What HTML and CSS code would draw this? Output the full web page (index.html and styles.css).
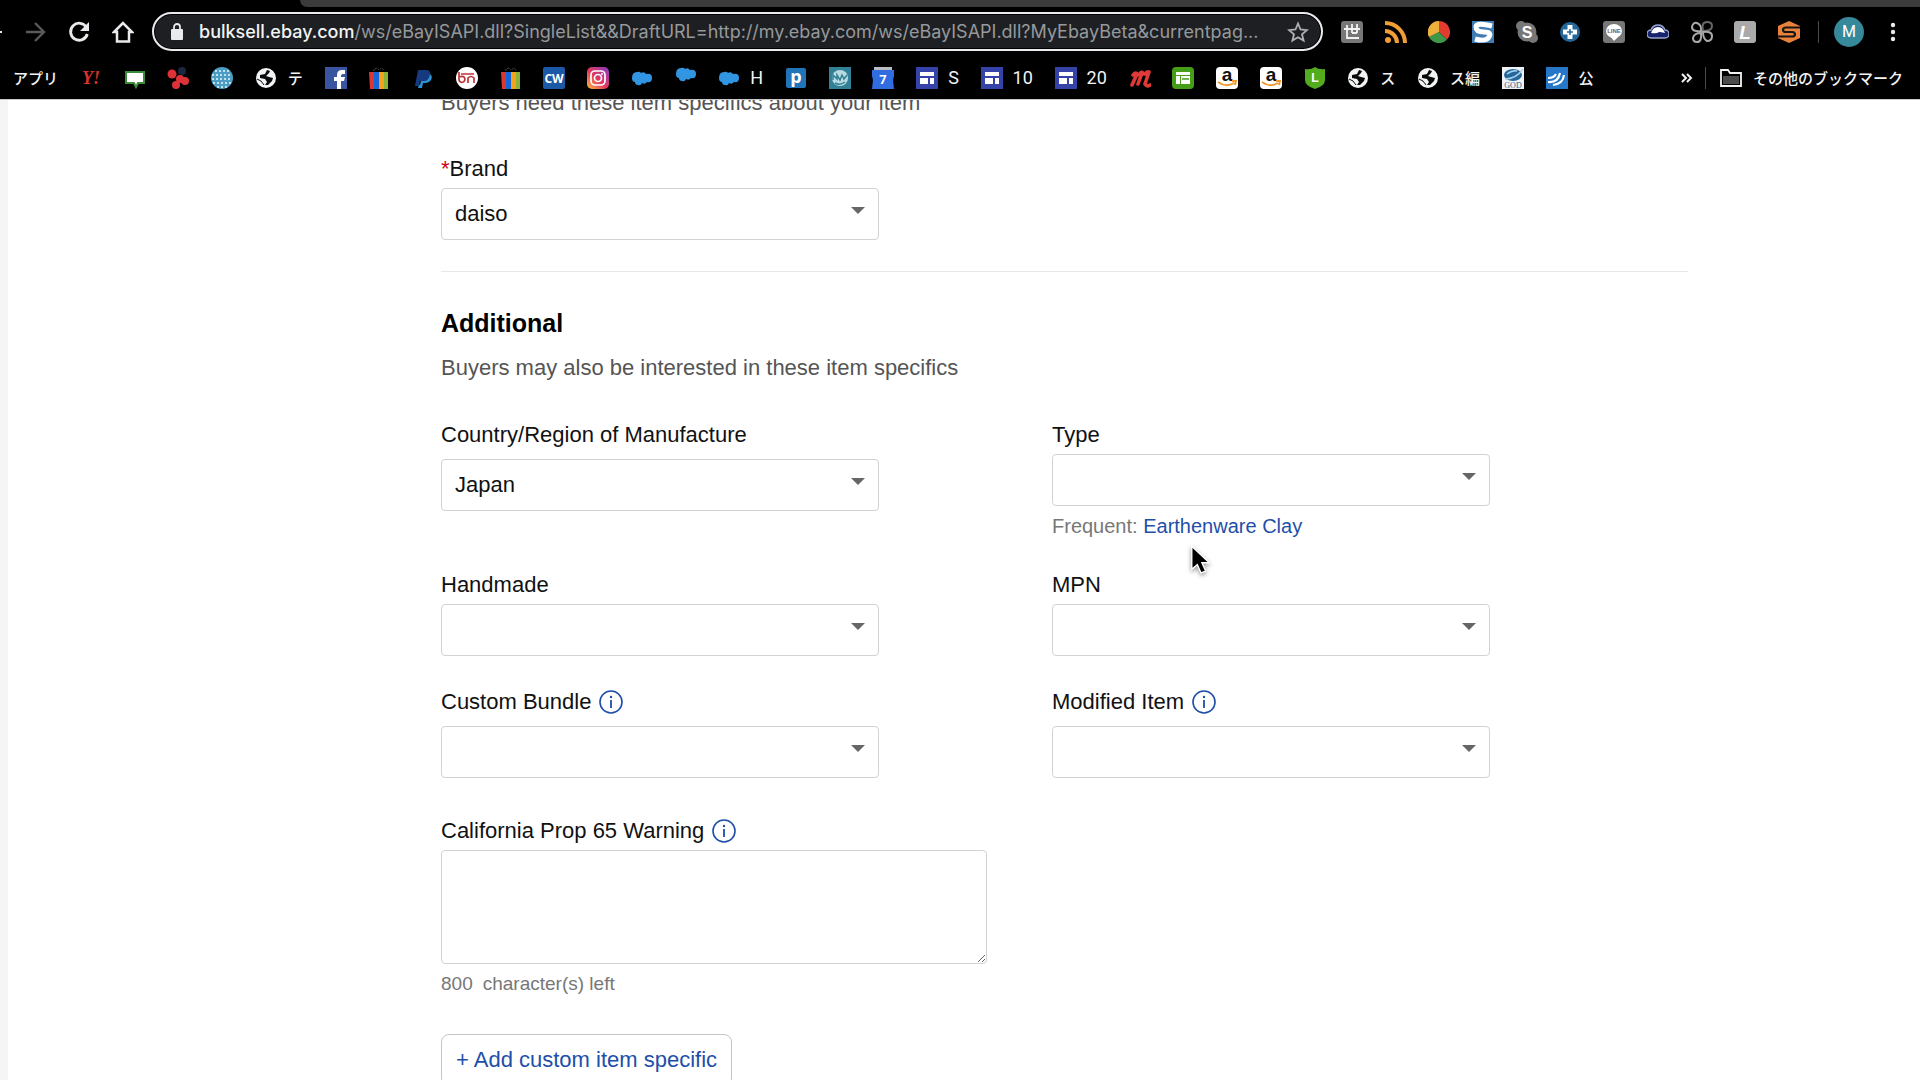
FILE: index.html
```html
<!DOCTYPE html>
<html lang="en">
<head>
<meta charset="utf-8">
<title>Item specifics</title>
<link rel="stylesheet" href="styles.css">
</head>
<body>
<svg class="sprite" aria-hidden="true">
  <symbol id="world" viewBox="0 0 22 22"><circle cx="11" cy="11" r="10" fill="#f1f3f4"/><path d="M12 3L10 7 5 8 5 11 10 12 12 15 10 18 13 18 17 14 18 11 14 10 11 9 14 6 15 4z" fill="#0a0a0a"/><path d="M2 12l4 2 3 4" fill="none" stroke="#0a0a0a" stroke-width="1"/></symbol>
  <symbol id="bag" viewBox="0 0 22 22"><path d="M6 4V2l3-1 2 2 3-2 2 2v1" fill="none" stroke="#444" stroke-width="1" stroke-dasharray="2 1"/><path d="M1 5h5v17H2z" fill="#d93832"/><path d="M6 5h5v17H6z" fill="#1466d8"/><path d="M11 5h5v17h-5z" fill="#f5a31d"/><path d="M16 5h4v17h-4z" fill="#86b53a"/></symbol>
  <symbol id="cloud" viewBox="0 0 22 22"><path d="M1 11Q1 5 6 5q3-1 4 1 3-2 5 1 6-1 6 4 0 5-5 4-2 3-5 1-1 3-4 2-3 0-3-3-3 0-3-4z" fill="#3195e2"/></symbol>
  <symbol id="sheet" viewBox="0 0 22 22"><path d="M0 0h22v22H0z" fill="#3543a8"/><path d="M4 5h14v4H4zM4 11h8v6H4zM14 11h4v6h-4z" fill="#fff"/></symbol>
  <symbol id="amazon" viewBox="0 0 22 22"><rect width="22" height="22" rx="4" fill="#fff"/><text x="11" y="14" font-size="19" font-weight="700" font-family="Liberation Sans, sans-serif" text-anchor="middle" fill="#111">a</text><path d="M2 15q8 6 16 1M16 14l4 0-1 4" fill="none" stroke="#f29a2e" stroke-width="2"/></symbol>
  <symbol id="info" viewBox="0 0 24 24"><circle cx="12" cy="12" r="11" fill="none" stroke="#1e4fa8" stroke-width="1.600"/><path d="M12 10v8" stroke="#1e4fa8" stroke-width="1.800"/><circle cx="12" cy="7" r="1.200" fill="#1e4fa8"/></symbol>
</svg>

<header class="browser">
  <div class="tabstrip"></div>
  <div class="toolbar">
    <nav class="nav" aria-label="Browser">
      <button class="nav-btn back" aria-label="Back"><svg viewBox="0 0 2 22"><path d="M0 10h2v2H0z" fill="#e8eaed"/></svg></button>
      <button class="nav-btn" aria-label="Forward"><svg viewBox="0 0 22 22"><path d="M2 11h18M11 2l9 9-9 9" fill="none" stroke="#5a5a5a" stroke-width="2.400"/></svg></button>
      <button class="nav-btn" aria-label="Reload"><svg viewBox="0 0 22 22"><path d="M18.500 6.500A8.500 8.500 0 1 0 19.300 13" fill="none" stroke="#e8eaed" stroke-width="2.800"/><path d="M21 1v9h-9z" fill="#e8eaed"/></svg></button>
      <button class="nav-btn" aria-label="Home"><svg viewBox="0 0 22 22"><path d="M11 2L2 11h3v9.500h12V11h3z" fill="none" stroke="#e8eaed" stroke-width="2.500"/></svg></button>
    </nav>
    <div class="address">
      <svg class="lock" viewBox="0 0 12 17"><rect y="6" width="12" height="11" rx="1" fill="#e8eaed"/><path d="M3 7V4a3 3 0 0 1 6 0v3" fill="none" stroke="#e8eaed" stroke-width="1.800"/></svg>
      <div class="url" role="textbox" aria-label="Address"><b>bulksell.ebay.com</b>/ws/eBayISAPI.dll?SingleList&amp;&amp;DraftURL=http://my.ebay.com/ws/eBayISAPI.dll?MyEbayBeta&amp;currentpag...</div>
      <button class="nav-btn" aria-label="Bookmark"><svg viewBox="0 0 22 22"><path d="M11 2.500l2.500 6 6.500.6-5 4.200 1.600 6.300L11 16.200l-5.600 3.400L7 13.300 2 9.100l6.500-.6z" fill="none" stroke="#aeb1b5" stroke-width="1.800"/></svg></button>
    </div>
    <div class="extensions">
      <svg viewBox="0 0 22 22"><rect width="22" height="22" rx="3" fill="#777"/><path d="M3 8h16M6 4v13h12M11 3v9M16 3v9M11 12h5" fill="none" stroke="#f2f2f2" stroke-width="1.800"/></svg>
      <svg viewBox="0 0 22 22"><circle cx="3" cy="19" r="3" fill="#f29d38"/><path d="M0 10a12 12 0 0 1 12 12M0 2a20 20 0 0 1 20 20" fill="none" stroke="#f29d38" stroke-width="4"/></svg>
      <svg viewBox="0 0 22 22"><path d="M11 11V0a11 11 0 0 1 8 18.500z" fill="#e23b30"/><path d="M11 11l8 7.500A11 11 0 0 1 1 16z" fill="#3f9847"/><path d="M11 11L1 16A11 11 0 0 1 11 0z" fill="#f0b13c"/></svg>
      <svg viewBox="0 0 22 22"><path d="M0 0h22v22H0z" fill="#3f7cb4"/><path d="M20 5Q4 1 4 6t8 5 5 5-14 2" fill="none" stroke="#fff" stroke-width="5"/></svg>
      <svg viewBox="0 0 22 22"><circle cx="5" cy="5" r="5" fill="#777"/><circle cx="17" cy="17" r="5" fill="#777"/><circle cx="11" cy="11" r="9.500" fill="#777"/><text x="11" y="17" font-size="16" font-weight="700" font-family="Liberation Sans, sans-serif" text-anchor="middle" fill="#fff">S</text></svg>
      <svg viewBox="0 0 22 22"><circle cx="11" cy="11" r="10" fill="#24679b"/><path d="M8.500 4h5v4.500H18v5h-4.500V18h-5v-4.500H4v-5h4.500z" fill="#fff"/><path d="M11 8v6M8 11h6" stroke="#24679b" stroke-width="1.500"/></svg>
      <svg viewBox="0 0 22 22"><rect width="22" height="22" rx="3" fill="#777"/><ellipse cx="11" cy="10" rx="8" ry="7" fill="#fff"/><path d="M7 15l4 5 4-4z" fill="#fff"/><text x="11" y="12" font-size="6" font-weight="700" font-family="Liberation Sans, sans-serif" text-anchor="middle" fill="#666">LINE</text></svg>
      <svg viewBox="0 0 22 22"><path d="M4 17a4 4 0 0 1 0-8q2-5 7-5t7 5a4 4 0 0 1 0 8z" fill="#17246d" stroke="#98a3cc" stroke-width="1.500"/><path d="M4 12q2-6 7-6t7 6q-4-1-6-1-2 2-8 1z" fill="#fff"/></svg>
      <svg viewBox="0 0 22 22" fill="none" stroke="#aaa" stroke-width="2"><path d="M10 10Q1 11 1 6q1-5 5-4 5 2 4 8z"/><path d="M12 10Q10 1 16 1q5 0 5 4 0 5-9 5z" stroke="#666"/><path d="M12 11q9-1 9 4 0 5-5 5-4-2-4-9z"/><path d="M10 12q1 9-4 9-4 0-4-4 1-5 8-5z"/></svg>
      <svg viewBox="0 0 22 22"><rect width="22" height="22" rx="3" fill="#aaa"/><text x="11" y="18" font-size="19" font-weight="700" font-style="italic" font-family="Liberation Sans, sans-serif" text-anchor="middle" fill="#fff">L</text></svg>
      <svg viewBox="0 0 22 22"><path d="M11 0l11 5v12l-11 5-11-5V5z" fill="#e9813a"/><path d="M22 6.500H8q-3 0-3 2.500 0 2 3 2h6q3 0 3 2.500 0 2-3 2H0" fill="none" stroke="#151515" stroke-width="2.200"/></svg>
    </div>
    <div class="profile">
      <span class="divider"></span>
      <button class="avatar" aria-label="Profile">M</button>
      <button class="nav-btn menu" aria-label="Menu"><svg viewBox="0 0 6 22"><g fill="#e8eaed"><circle cx="3" cy="4" r="2.200"/><circle cx="3" cy="11" r="2.200"/><circle cx="3" cy="18" r="2.200"/></g></svg></button>
    </div>
  </div>

  <nav class="bookmarks" aria-label="Bookmarks">
    <div class="bookmark-list">
      <a href="#">アプリ</a>
      <a href="#"><svg viewBox="0 0 22 22"><text x="11" y="17" font-size="18" font-weight="700" font-style="italic" font-family="Liberation Serif, serif" text-anchor="middle" fill="#d8322c">Y!</text></svg></a>
      <a href="#"><svg viewBox="0 0 22 22"><path d="M2 5h18v11h-6l-2 4-2-4H2z" fill="#fff" stroke="#3c8a3a" stroke-width="2"/></svg></a>
      <a href="#"><svg viewBox="0 0 22 22"><circle cx="15" cy="4" r="4" fill="#1c2742"/><g fill="#dc3238"><circle cx="5" cy="7" r="4.500"/><circle cx="13" cy="12" r="4"/><circle cx="9" cy="18" r="4"/><circle cx="18" cy="14" r="4"/></g></svg></a>
      <a href="#"><svg viewBox="0 0 22 22"><circle cx="11" cy="11" r="11" fill="#4b9dc4"/><path d="M4 4h14M1 8h20M1 12h20M2 16h18M6 20h10" stroke="#c1e1ed" stroke-width="2" stroke-dasharray="2 2"/></svg></a>
      <a href="#"><svg><use href="#world"/></svg>テ</a>
      <a href="#"><svg viewBox="0 0 22 22"><path d="M0 0h22v22H0z" fill="#3a559f"/><path d="M12 22v-8H9v-4h3V8q0-5 5-5h3v4h-2q-2 0-2 2v1h4l-1 4h-3v8z" fill="#fff"/></svg></a>
      <a href="#"><svg><use href="#bag"/></svg></a>
      <a href="#"><svg viewBox="0 0 22 22"><path d="M6 3h8q5 0 4 5-1 6-7 6H8l-1 5H3z" fill="#153a80"/><path d="M18 7q3 2 1 6-2 3-6 3h-2l-1 5H6l1-3h1l1-4h3q5 0 6-7z" fill="#2c92d4"/></svg></a>
      <a href="#"><svg viewBox="0 0 22 22"><circle cx="11" cy="11" r="11" fill="#fff"/><path d="M3 5v8a3 3 0 1 0 1-3M12 16v-5q3-3 6 0v5M5 7h13" fill="none" stroke="#bd3338" stroke-width="1.700"/></svg></a>
      <a href="#"><svg><use href="#bag"/></svg></a>
      <a href="#"><svg viewBox="0 0 22 22"><rect width="22" height="22" rx="2" fill="#1b58a5"/><text x="11" y="16" font-size="12" font-weight="700" font-family="Open Sans, sans-serif" text-anchor="middle" fill="#fff">CW</text></svg></a>
      <a href="#"><svg viewBox="0 0 22 22"><defs><linearGradient id="ig" x1="0" y1="1" x2="1" y2="0"><stop offset="0" stop-color="#fbbc45"/><stop offset=".45" stop-color="#e5395c"/><stop offset="1" stop-color="#873bc7"/></linearGradient></defs><rect width="22" height="22" rx="5" fill="url(#ig)"/><rect x="4" y="4" width="14" height="14" rx="4" fill="none" stroke="#fff" stroke-width="1.700"/><circle cx="11" cy="11" r="3.500" fill="none" stroke="#fff" stroke-width="1.700"/><circle cx="15" cy="7" r="1" fill="#fff"/></svg></a>
      <a href="#"><svg><use href="#cloud"/></svg></a>
      <a href="#" class="raised"><svg><use href="#cloud"/></svg></a>
      <a href="#" class="latin"><svg><use href="#cloud"/></svg>H</a>
      <a href="#"><svg viewBox="0 0 22 22"><rect x="1" y="1" width="20" height="20" rx="2" fill="#1f75b8"/><text x="11" y="16" font-size="18" font-weight="700" font-family="Open Sans, sans-serif" text-anchor="middle" fill="#fff">p</text></svg></a>
      <a href="#"><svg viewBox="0 0 22 22"><path d="M0 0h22v22H0z" fill="#328096"/><circle cx="11" cy="11" r="8" fill="#b9dbe1"/><path d="M4 13V8l4 4V8l3 5 2-5 2 4 3-4M6 16q5 3 10-1" fill="none" stroke="#328096" stroke-width="1.500"/></svg></a>
      <a href="#"><svg viewBox="0 0 22 22"><path d="M2 0h18v4H2z" fill="#b9bcc2"/><path d="M0 3h22v6l-1 4 1 9H0l1-9-1-4z" fill="#2f6de0"/><text x="11" y="17" font-size="13" font-weight="700" font-family="Roboto, sans-serif" text-anchor="middle" fill="#fff">7</text></svg></a>
      <a href="#" class="latin"><svg><use href="#sheet"/></svg>S</a>
      <a href="#" class="latin"><svg><use href="#sheet"/></svg>10</a>
      <a href="#" class="latin"><svg><use href="#sheet"/></svg>20</a>
      <a href="#"><svg viewBox="0 0 22 22"><path d="M3 18L8 7M9 17l4-11M16 17l4-12M4 8q3-4 4 0M10 8q3-5 4-1M16 7q2-3 4-2M16 17q2 3 5 1" fill="none" stroke="#e03a38" stroke-width="3.600" stroke-linecap="round"/></svg></a>
      <a href="#"><svg viewBox="0 0 22 22"><rect width="22" height="22" rx="4" fill="#459d18"/><path d="M4 5h14v3H4zM4 9h4v8H4zM9 9h9v8H9z" fill="#fff"/><path d="M10 12h7" stroke="#459d18" stroke-width="1.500"/></svg></a>
      <a href="#"><svg><use href="#amazon"/></svg></a>
      <a href="#"><svg><use href="#amazon"/></svg></a>
      <a href="#"><svg viewBox="0 0 22 22"><path d="M1 2q6 1 10-2 4 3 10 2v11q0 6-10 9-10-3-10-9z" fill="#53ac1d"/><text x="11" y="15" font-size="12" font-weight="700" font-family="Liberation Sans, sans-serif" text-anchor="middle" fill="#fff">L</text></svg></a>
      <a href="#"><svg><use href="#world"/></svg>ス</a>
      <a href="#"><svg><use href="#world"/></svg>ス編</a>
      <a href="#"><svg viewBox="0 0 22 22"><path d="M0 0h22v22H0z" fill="#eef3f7"/><ellipse cx="11" cy="8" rx="9" ry="6" fill="#25679b"/><path d="M5 7q6-4 10-3M3 12Q14 12 21 2" fill="none" stroke="#a9d2ea" stroke-width="1.500"/><text x="11" y="21" font-size="8" font-family="Liberation Serif, serif" text-anchor="middle" fill="#345f89">GOD</text></svg></a>
      <a href="#"><svg viewBox="0 0 22 22"><path d="M0 0h22v22H0z" fill="#2677c7"/><path d="M2 11q6 0 8-4M2 15q10 1 12-9M7 18q10-1 11-10" fill="none" stroke="#fff" stroke-width="2.200"/></svg>公</a>
    </div>
    <div class="other">
      <button class="more" aria-label="More bookmarks"><svg viewBox="0 0 12 12"><path d="M1 2l4 4-4 4M6 2l4 4-4 4" fill="none" stroke="#f1f3f4" stroke-width="2"/></svg></button>
      <span class="divider"></span>
      <a href="#"><svg viewBox="0 0 22 22"><path d="M1 19V3h7l2 3h11v13z" fill="none" stroke="#f1f3f4" stroke-width="1.800"/><path d="M3 9h16v8H3z" fill="#4b4b4b"/></svg>その他のブックマーク</a>
    </div>
  </nav>
</header>

<main class="page">
  <form class="specifics">
    <section class="required">
      <p class="lead">Buyers need these item specifics about your item</p>
      <div class="field">
        <label for="brand"><span class="star">*</span>Brand</label>
        <span class="picker"><select id="brand"><option>daiso</option></select></span>
      </div>
    </section>

    <section class="additional">
      <h2>Additional</h2>
      <p class="lead">Buyers may also be interested in these item specifics</p>
      <div class="grid">
        <div class="field roomy">
          <label for="country">Country/Region of Manufacture</label>
          <span class="picker"><select id="country"><option>Japan</option></select></span>
        </div>
        <div class="field">
          <label for="type">Type</label>
          <span class="picker"><select id="type"><option></option></select></span>
          <p class="hint">Frequent: <a href="#">Earthenware Clay</a></p>
          <svg class="pointer" viewBox="0 0 26 34"><path d="M3 2v25l6-5 4 9 5-2-4-9h8z" fill="#000" stroke="#fff" stroke-width="1.500"/></svg>
        </div>
        <div class="field">
          <label for="handmade">Handmade</label>
          <span class="picker"><select id="handmade"><option></option></select></span>
        </div>
        <div class="field">
          <label for="mpn">MPN</label>
          <span class="picker"><select id="mpn"><option></option></select></span>
        </div>
        <div class="field roomy">
          <label for="bundle">Custom Bundle <svg class="info"><use href="#info"/></svg></label>
          <span class="picker"><select id="bundle"><option></option></select></span>
        </div>
        <div class="field roomy">
          <label for="modified">Modified Item <svg class="info"><use href="#info"/></svg></label>
          <span class="picker"><select id="modified"><option></option></select></span>
        </div>
      </div>
      <div class="field warning">
        <label for="prop65">California Prop 65 Warning <svg class="info"><use href="#info"/></svg></label>
        <textarea id="prop65"></textarea>
        <p class="count"><span>800</span> <span>character(s) left</span></p>
      </div>
      <button type="button" class="add">+ Add custom item specific</button>
    </section>
  </form>
</main>
</body>
</html>
```

FILE: styles.css
```css
* { box-sizing: border-box; }

body {
  margin: 0;
  height: 100vh;
  display: flex;
  flex-direction: column;
  overflow: hidden;
  background: #fff;
  color: #111;
  font-family: "Liberation Sans", Arial, sans-serif;
  font-size: 22px;
  line-height: 24px;
}

h2, p { margin: 0; }
a { text-decoration: none; }
svg { display: block; flex: none; }
button { padding: 0; border: 0; background: none; font: inherit; }
.sprite { position: absolute; width: 0; height: 0; }

/* Browser frame */
.browser {
  flex: none;
  background: #000;
  color: #f1f3f4;
  border-bottom: 1px solid #c8c8c8;
}
.tabstrip {
  height: 7px;
  margin-left: 300px;
  background: #3b3b3b;
  border-bottom-left-radius: 8px;
}
.toolbar {
  display: flex;
  align-items: center;
  height: 49px;
}
.nav { display: flex; gap: 22px; margin-right: 18px; }
.nav-btn { flex: none; width: 22px; height: 22px; }
.nav-btn.back { width: 2px; }
.nav-btn.menu { width: 6px; }
.address {
  flex: 1;
  min-width: 0;
  display: flex;
  align-items: center;
  height: 39px;
  padding: 0 12px 0 17px;
  border: 2px solid #e8eaed;
  border-radius: 20px;
  background: #1d1f22;
  box-shadow: inset 0 0 0 1px #000;
}
.lock { width: 12px; height: 17px; margin-right: 16px; }
.url {
  flex: 1;
  min-width: 0;
  overflow: hidden;
  white-space: nowrap;
  color: #96999c;
  font-family: Inter, Roboto, sans-serif;
  font-size: 18px;
}
.url b { color: #f1f3f4; font-weight: 500; }
.extensions {
  display: flex;
  justify-content: space-between;
  width: 459px;
  margin-left: 18px;
}
.extensions svg { width: 22px; height: 22px; }
.profile { display: flex; align-items: center; margin: 0 24px 0 18px; }
.divider { width: 1px; height: 22px; background: #4a4a4a; }
.avatar {
  width: 30px;
  height: 30px;
  margin: 0 26px 0 15px;
  border-radius: 50%;
  background: #35899b;
  color: #fff;
  font-family: Roboto, sans-serif;
  font-size: 16px;
}
.bookmarks {
  display: flex;
  justify-content: space-between;
  height: 43px;
  padding: 0 17px 0 13px;
  font-family: "Noto Sans CJK JP", sans-serif;
  font-size: 15px;
  font-weight: 500;
}
.bookmark-list {
  flex: 0 1 1581px;
  display: flex;
  align-items: center;
  justify-content: space-between;
}
.bookmarks a {
  display: flex;
  align-items: center;
  gap: 11px;
  color: #f1f3f4;
  white-space: nowrap;
}
.bookmarks a svg { width: 22px; height: 22px; }
.bookmarks .latin { gap: 10px; font-family: Roboto, sans-serif; font-size: 18px; font-weight: 400; }
.bookmarks .raised { padding-bottom: 8px; }
.other { display: flex; align-items: center; }
.more { width: 12px; height: 12px; margin-right: 12px; }
.other .divider { margin-right: 14px; }

/* Listing form */
.page {
  flex: 1;
  min-height: 0;
  overflow: hidden;
  border-left: 8px solid #f5f5f5;
  padding: 0 232px 0 433px;
}
.lead { color: #555; }
.required {
  margin-top: -9px;
  padding-bottom: 31px;
  border-bottom: 1px solid #e8e8e8;
}
.required .field { margin-top: 42px; }
.field {
  position: relative;
  display: flex;
  flex-direction: column;
  gap: 7px;
  max-width: 438px;
}
.field.roomy { gap: 12px; }
.field label { display: flex; align-items: center; }
.star { color: #d0021b; }
.info { width: 24px; height: 24px; margin-left: 8px; }
.picker { position: relative; display: block; }
.picker::after {
  content: "";
  position: absolute;
  top: 19px;
  right: 14px;
  border: 7px solid transparent;
  border-top-color: #666;
  border-bottom: 0;
  pointer-events: none;
}
select, textarea {
  display: block;
  width: 100%;
  margin: 0;
  border: 1px solid #d2d2d2;
  border-radius: 4px;
  background: #fff;
  color: #111;
  font: inherit;
}
select { height: 52px; padding: 0 40px 0 13px; appearance: none; }
textarea { height: 114px; }
.additional { padding-top: 37px; }
h2 { margin-bottom: 19px; color: #000; font-size: 25px; line-height: 28px; }
.grid {
  display: grid;
  grid-template-columns: minmax(0, 611px) minmax(0, 1fr);
  row-gap: 34px;
  margin-top: 43px;
}
.hint { margin: 1px 0; color: #777; font-size: 20px; }
.hint a { color: #1e4fa8; }
.pointer {
  position: absolute;
  top: 121px;
  left: 137px;
  width: 24px;
  height: 32px;
  filter: drop-shadow(0 2px 2px #0006);
}
.field.warning { max-width: 546px; margin-top: 41px; }
.count { display: flex; gap: 10px; margin-top: 1px; color: #777; font-size: 19px; }
.add {
  height: 52px;
  margin-top: 38px;
  padding: 0 14px;
  border: 1px solid #c4c4c4;
  border-radius: 8px;
  background: #fff;
  color: #1e4fa8;
}
```
